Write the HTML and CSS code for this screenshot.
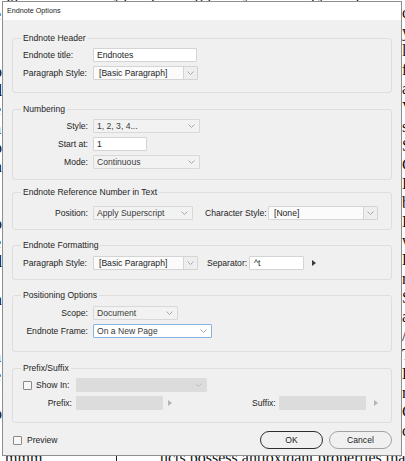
FILE: index.html
```html
<!DOCTYPE html>
<html lang="en">
<head>
<meta charset="utf-8">
<title>Endnote Options</title>
<link rel="stylesheet" href="styles.css">
</head>
<body>
<div class="desk">
  <div class="strip top"><div class="top-text">qjp&nbsp;&nbsp;&nbsp;&nbsp;&nbsp;&nbsp;&nbsp;&nbsp;&nbsp;&nbsp;&nbsp;&nbsp;&nbsp;&nbsp;&nbsp;&nbsp;&nbsp;&nbsp;&nbsp;&nbsp;&nbsp;&nbsp;&nbsp;jq&nbsp;&nbsp;&nbsp;&nbsp;&nbsp;&nbsp;p&nbsp;&nbsp;&nbsp;&nbsp;&nbsp;&nbsp;&nbsp;&nbsp;&nbsp;gq&nbsp;&nbsp;&nbsp;&nbsp;&nbsp;&nbsp;&nbsp;&nbsp;y&nbsp;&nbsp;&nbsp;&nbsp;&nbsp;&nbsp;&nbsp;&nbsp;&nbsp;&nbsp;&nbsp;&nbsp;&nbsp;&nbsp;&nbsp;pj&nbsp;&nbsp;&nbsp;&nbsp;&nbsp;&nbsp;&nbsp;q</div></div>
  <div class="strip left"><div class="left-text">e<br>r<br>l<br>o<br>d<br>e<br>a<br>o<br>n<br>t<br>s<br>o<br>e<br>d<br>r<br>n<br>t<br>l<br>a<br>e<br>s<br>o</div></div>

  <div class="dialog">
    <div class="titlebar">Endnote Options</div>
    <div class="content">

      <fieldset class="group header">
        <legend>Endnote Header</legend>
        <div class="row">
          <span class="lbl">Endnote title:</span>
          <div class="input w-title">Endnotes</div>
        </div>
        <div class="row">
          <span class="lbl">Paragraph Style:</span>
          <div class="combo w-para">
            <span class="combo-text">[Basic Paragraph]</span>
            <span class="combo-btn"><svg class="chev" width="7" height="4" viewBox="0 0 7 4"><polyline points="0.5,0.5 3.5,3.5 6.5,0.5"/></svg></span>
          </div>
        </div>
      </fieldset>

      <fieldset class="group numbering">
        <legend>Numbering</legend>
        <div class="row">
          <span class="lbl right">Style:</span>
          <div class="select w-style"><span>1, 2, 3, 4...</span><svg class="chev" width="7" height="4" viewBox="0 0 7 4"><polyline points="0.5,0.5 3.5,3.5 6.5,0.5"/></svg></div>
        </div>
        <div class="row">
          <span class="lbl right">Start at:</span>
          <div class="input w-start">1</div>
        </div>
        <div class="row">
          <span class="lbl right">Mode:</span>
          <div class="select w-style"><span>Continuous</span><svg class="chev" width="7" height="4" viewBox="0 0 7 4"><polyline points="0.5,0.5 3.5,3.5 6.5,0.5"/></svg></div>
        </div>
      </fieldset>

      <fieldset class="group refnum">
        <legend>Endnote Reference Number in Text</legend>
        <div class="row">
          <span class="lbl right">Position:</span>
          <div class="select w-pos"><span>Apply Superscript</span><svg class="chev" width="7" height="4" viewBox="0 0 7 4"><polyline points="0.5,0.5 3.5,3.5 6.5,0.5"/></svg></div>
          <span class="lbl-inline charstyle">Character Style:</span>
          <div class="combo w-char">
            <span class="combo-text">[None]</span>
            <span class="combo-btn"><svg class="chev" width="7" height="4" viewBox="0 0 7 4"><polyline points="0.5,0.5 3.5,3.5 6.5,0.5"/></svg></span>
          </div>
        </div>
      </fieldset>

      <fieldset class="group formatting">
        <legend>Endnote Formatting</legend>
        <div class="row">
          <span class="lbl">Paragraph Style:</span>
          <div class="combo w-para">
            <span class="combo-text">[Basic Paragraph]</span>
            <span class="combo-btn"><svg class="chev" width="7" height="4" viewBox="0 0 7 4"><polyline points="0.5,0.5 3.5,3.5 6.5,0.5"/></svg></span>
          </div>
          <span class="lbl-inline separator">Separator:</span>
          <div class="input w-sep">^t</div>
          <span class="tri sep-tri"></span>
        </div>
      </fieldset>

      <fieldset class="group positioning">
        <legend>Positioning Options</legend>
        <div class="row">
          <span class="lbl right">Scope:</span>
          <div class="select w-scope"><span>Document</span><svg class="chev" width="7" height="4" viewBox="0 0 7 4"><polyline points="0.5,0.5 3.5,3.5 6.5,0.5"/></svg></div>
        </div>
        <div class="row">
          <span class="lbl right">Endnote Frame:</span>
          <div class="select focused w-frame"><span>On a New Page</span><svg class="chev" width="7" height="4" viewBox="0 0 7 4"><polyline points="0.5,0.5 3.5,3.5 6.5,0.5"/></svg></div>
        </div>
      </fieldset>

      <fieldset class="group prefix">
        <legend>Prefix/Suffix</legend>
        <div class="row">
          <span class="lbl narrow check-lbl"><span class="checkbox"></span>Show In:</span>
          <div class="select disabled w-show"><span></span><svg class="chev" width="7" height="4" viewBox="0 0 7 4"><polyline points="0.5,0.5 3.5,3.5 6.5,0.5"/></svg></div>
        </div>
        <div class="row">
          <span class="lbl narrow right">Prefix:</span>
          <div class="input disabled w-affix"></div>
          <span class="tri faint prefix-tri"></span>
          <span class="lbl-inline suffix">Suffix:</span>
          <div class="input disabled w-affix"></div>
          <span class="tri faint suffix-tri"></span>
        </div>
      </fieldset>

      <div class="footer">
        <label class="preview"><span class="checkbox"></span>Preview</label>
        <div class="buttons">
          <button class="btn primary">OK</button>
          <button class="btn">Cancel</button>
        </div>
      </div>

    </div>
  </div>

  <div class="strip right"><div class="right-text">c<br>y<br>l<br>f<br>a<br>V<br>s<br>S<br>C<br>I<br>b<br>I<br>w<br>F<br>r<br>S<br>a<br>/<br>T<br>D<br>n<br>C<br>c</div></div>
  <div class="strip bottom">
    <div class="bottom-text"><span class="cell-a">mmm</span><span class="cell-b">ucts possess antioxidant properties that benefit</span></div>
  </div>
</div>
</body>
</html>
```

FILE: styles.css
```css
html, body {
  margin: 0;
  padding: 0;
}

body {
  width: 405px;
  height: 461px;
  overflow: hidden;
  background: #ffffff;
}

/* document page behind the dialog */
.desk {
  display: grid;
  grid-template-columns: 2px 400px 3px;
  grid-template-rows: 1px 455px 5px;
  width: 405px;
  height: 461px;
  font-family: "Liberation Serif", serif;
  font-size: 16px;
  color: #111;
}

.strip {
  overflow: hidden;
  min-width: 0;
  min-height: 0;
}

.strip.top {
  grid-column: 1 / -1;
  grid-row: 1;
}

.top-text {
  margin-top: -15px;
  line-height: 16px;
  white-space: nowrap;
  padding-left: 2px;
}

.strip.left {
  grid-column: 1;
  grid-row: 2;
}

.left-text {
  margin-left: -6px;
  margin-top: 4px;
  line-height: 19px;
}

.strip.right {
  grid-column: 3;
  grid-row: 2;
}

.right-text {
  margin-top: 2px;
  line-height: 19px;
}

.strip.bottom {
  grid-column: 1 / -1;
  grid-row: 3;
}

.bottom-text {
  display: flex;
  margin-top: -6px;
  line-height: 16px;
  white-space: nowrap;
}

.cell-a {
  flex: none;
  width: 111px;
  padding-left: 5px;
  border-right: 1px solid #222;
}

.cell-b {
  flex: none;
  padding-left: 43px;
}

/* dialog window */
.dialog {
  grid-column: 2;
  grid-row: 2;
  box-sizing: border-box;
  border: 1px solid #8e8e8e;
  background: #f0f0f0;
  font-family: "Liberation Sans", Arial, sans-serif;
  font-size: 8.6px;
  color: #1e1e1e;
  display: flex;
  flex-direction: column;
}

.titlebar {
  height: 18px;
  line-height: 18px;
  background: #ffffff;
  padding-left: 4px;
  font-size: 7.2px;
  color: #222;
}

.content {
  padding: 12px 9px 0 9px;
}

/* groups */
.group {
  margin: 0;
  min-width: 0;
  border: 1px solid #dedede;
  border-radius: 3px;
  padding: 4px 9px 12px 10px;
}

.group legend {
  padding: 0 2px;
  margin-left: -2px;
  line-height: 12px;
  height: 12px;
  color: #1e1e1e;
}

.group + .group {
  margin-top: 10px;
}

.header { padding-top: 4px; padding-bottom: 12px; }
.numbering { padding-top: 4px; padding-bottom: 10px; }
.group.refnum { margin-top: 6px; padding-top: 8px; padding-bottom: 9px; }
.group.formatting { margin-top: 9px; padding-top: 5px; padding-bottom: 9px; }
.group.positioning { margin-top: 9px; padding-top: 5px; padding-bottom: 13px; }
.prefix { padding-top: 4px; padding-bottom: 12px; }

.row {
  display: flex;
  align-items: center;
  height: 14px;
}

.row + .row {
  margin-top: 4px;
}

.lbl {
  flex: none;
  width: 65px;
  margin-right: 5px;
  line-height: 14px;
  white-space: nowrap;
}

.lbl.narrow {
  width: 49px;
  margin-right: 4px;
}

.lbl.right {
  text-align: right;
}

.lbl-inline {
  flex: none;
  line-height: 14px;
  white-space: nowrap;
}

.charstyle {
  width: 57px;
  margin-left: 12px;
  margin-right: 6px;
}

.separator {
  width: 38px;
  margin-left: 9px;
  margin-right: 4px;
}

.suffix {
  width: 23px;
  margin-left: 80px;
  margin-right: 4px;
}

/* controls */
.input,
.select,
.combo {
  flex: none;
  box-sizing: border-box;
  height: 14px;
  line-height: 12px;
  white-space: nowrap;
}

.input {
  background: #ffffff;
  border: 1px solid #d4d4d4;
  border-radius: 1px;
  padding-left: 3px;
  color: #1e1e1e;
}

.input.disabled {
  background: #dcdcdc;
  border-color: #dcdcdc;
}

.select {
  display: flex;
  align-items: center;
  justify-content: space-between;
  background: #f2f2f2;
  border: 1px solid #d8d8d8;
  border-radius: 1px;
  padding: 0 4px 0 3px;
  color: #3a3a3a;
}

.select.focused {
  background: #ffffff;
  border-color: #86b3e3;
}

.select.disabled {
  background: #dcdcdc;
  border-color: #dcdcdc;
}

.select.disabled .chev polyline {
  stroke: #c0c0c0;
}

.combo {
  display: flex;
  background: #fbfbfb;
  border: 1px solid #d4d4d4;
  border-radius: 1px;
}

.combo-text {
  flex: 1;
  padding-left: 5px;
  color: #1e1e1e;
}

.combo-btn {
  flex: none;
  width: 13px;
  display: flex;
  align-items: center;
  justify-content: center;
  background: #eeeeee;
  border-left: 1px solid #d4d4d4;
}

.chev {
  display: block;
  flex: none;
}

.chev polyline {
  fill: none;
  stroke: #a8a8a8;
  stroke-width: 1;
}

.w-title { width: 104px; }
.w-para { width: 105px; }
.w-style { width: 107px; }
.w-start { width: 54px; }
.w-pos { width: 100px; }
.w-char { width: 110px; }
.w-sep { width: 55px; padding-left: 4px; }
.w-scope { width: 85px; }
.w-frame { width: 119px; }
.w-show { width: 131px; }
.w-affix { width: 87px; }

/* small play triangles */
.tri {
  flex: none;
  width: 0;
  height: 0;
  border-top: 3px solid transparent;
  border-bottom: 3px solid transparent;
  border-left: 4px solid #3a3a3a;
}

.tri.faint {
  border-left-color: #b4b4b4;
}

.sep-tri { margin-left: 8px; }
.prefix-tri { margin-left: 5px; }
.suffix-tri { margin-left: 8px; }

/* checkboxes */
.checkbox {
  display: inline-block;
  box-sizing: border-box;
  width: 9px;
  height: 9px;
  border: 1px solid #8a8a8a;
  border-radius: 1px;
  background: #f7f7f7;
  vertical-align: middle;
}

.check-lbl {
  display: flex;
  align-items: center;
}

.check-lbl .checkbox {
  margin-right: 4px;
}

/* footer */
.footer {
  display: flex;
  align-items: center;
  justify-content: space-between;
  margin-top: 8px;
  height: 18px;
  padding-left: 1px;
}

.preview {
  display: flex;
  align-items: center;
  font-size: 8.6px;
}

.preview .checkbox {
  margin-right: 5px;
}

.buttons {
  display: flex;
  gap: 6px;
}

.btn {
  box-sizing: border-box;
  width: 63px;
  height: 18px;
  padding: 0;
  margin: 0;
  border: 1px solid #a3a3a3;
  border-radius: 9px;
  background: #f0f0f0;
  font-family: "Liberation Sans", Arial, sans-serif;
  font-size: 8.6px;
  color: #222;
}

.btn.primary {
  border: 1.5px solid #2e2e2e;
}
```
